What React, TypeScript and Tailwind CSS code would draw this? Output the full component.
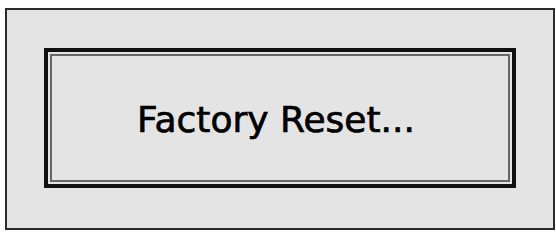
export default function App() {
  return (
    <div className="w-[556px] h-[232px] bg-white overflow-hidden pt-[8px] pl-[5px]">
      <div className="w-[550px] h-[222px] border-2 border-[#2a2a2a] bg-[#e4e4e4] pt-[38px] pl-[37px]">
        <div className="w-[472px] h-[140px] border-4 border-[#111111] p-[2px]">
          <div className="w-full h-full border-2 border-[#666666] flex items-center justify-center">
            <span
              className="text-[36px] leading-none text-black pr-[8px] pt-[4px] [-webkit-text-stroke:0.7px_black]"
              style={{ fontFamily: '"DejaVu Sans", sans-serif' }}
            >
              Factory Reset...
            </span>
          </div>
        </div>
      </div>
    </div>
  );
}
